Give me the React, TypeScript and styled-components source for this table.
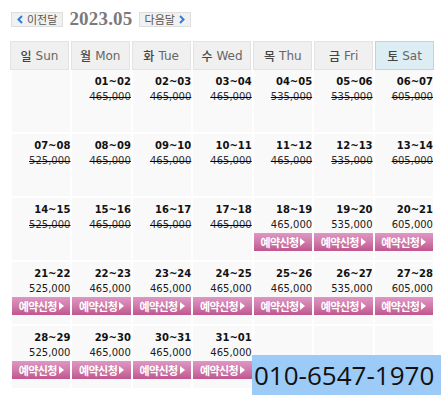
import styled, { createGlobalStyle } from "styled-components";

const GlobalStyle = createGlobalStyle`
  html, body { margin: 0; padding: 0; background: #fff; }
  body { font-family: "DejaVu Sans", "Noto Sans CJK KR", sans-serif; overflow: hidden; }
`;

const Page = styled.div`
  position: relative;
  width: 441px;
  height: 396px;
`;

const Nav = styled.div`
  display: flex;
  align-items: center;
  gap: 6px;
  height: 14px;
  margin: 12px 0 0 11px;
`;

const NavButton = styled.div`
  height: 13px;
  display: flex;
  align-items: center;
  gap: 4px;
  padding: 0 5px;
  border: 1px solid #dedede;
  background: #f1f1f1;
  font-family: "Noto Sans CJK KR", sans-serif;
  font-size: 11px;
  color: #555;
  line-height: 13px;
`;

const Year = styled.div`
  font-family: "Liberation Serif", serif;
  font-weight: bold;
  font-size: 19px;
  line-height: 14px;
  color: #7a7a7a;
  letter-spacing: 0.2px;
`;

const HeadRow = styled.div`
  display: grid;
  grid-template-columns: repeat(7, 1fr);
  gap: 2px;
  width: 424px;
  margin: 15px 0 0 10px;
  position: relative;
  z-index: 1;
`;

const HeadCell = styled.div<{ $sat?: boolean }>`
  height: 27px;
  display: flex;
  align-items: center;
  justify-content: center;
  gap: 4px;
  border: 1px solid ${(p) => (p.$sat ? "#bad6e6" : "#e3e3e3")};
  background: ${(p) => (p.$sat ? "#dcedf3" : "#f0f0f0")};
  font-size: 12px;
  color: #666;

  b {
    font-family: "Noto Sans CJK KR", sans-serif;
    font-weight: 500;
    color: #444;
  }
`;

const Body = styled.div`
  display: grid;
  grid-template-columns: repeat(7, 1fr);
  grid-auto-rows: 62px;
  gap: 2px;
  width: 421px;
  margin: 0 0 0 12px;
`;

const Day = styled.div`
  background: #f9f9f9;
  padding-top: 4px;
  text-align: right;
  font-size: 10px;
  line-height: 15px;
`;

const Dates = styled.div`
  font-weight: bold;
  color: #111;
`;

const Price = styled.div<{ $closed?: boolean }>`
  color: ${(p) => (p.$closed ? "#333" : "#1a1a1a")};
  text-decoration: ${(p) => (p.$closed ? "line-through" : "none")};
  text-decoration-color: #000;
`;

const BookButton = styled.div`
  margin-top: 1px;
  height: 18px;
  display: flex;
  align-items: center;
  justify-content: center;
  gap: 2px;
  background: linear-gradient(to bottom, #de97c4 0%, #d07aab 50%, #c1568f 100%);
  font-family: "Noto Sans CJK KR", sans-serif;
  font-weight: bold;
  font-size: 11px;
  color: #fff;
  letter-spacing: -0.6px;
`;

const Phone = styled.div`
  position: absolute;
  left: 252px;
  top: 343px;
  width: 189px;
  height: 40px;
  background: #9dcbf8;
  display: flex;
  align-items: center;
  padding-left: 2px;
  box-sizing: border-box;
  font-family: "Open Sans", sans-serif;
  font-size: 26px;
  color: #111;
  white-space: nowrap;
`;

type Cell = { d?: string; p?: string; open?: boolean };

const rows: Cell[][] = [
  [{}, { d: "01~02", p: "465,000" }, { d: "02~03", p: "465,000" }, { d: "03~04", p: "465,000" }, { d: "04~05", p: "535,000" }, { d: "05~06", p: "535,000" }, { d: "06~07", p: "605,000" }],
  [{ d: "07~08", p: "525,000" }, { d: "08~09", p: "465,000" }, { d: "09~10", p: "465,000" }, { d: "10~11", p: "465,000" }, { d: "11~12", p: "465,000" }, { d: "12~13", p: "535,000" }, { d: "13~14", p: "605,000" }],
  [{ d: "14~15", p: "525,000" }, { d: "15~16", p: "465,000" }, { d: "16~17", p: "465,000" }, { d: "17~18", p: "465,000" }, { d: "18~19", p: "465,000", open: true }, { d: "19~20", p: "535,000", open: true }, { d: "20~21", p: "605,000", open: true }],
  [{ d: "21~22", p: "525,000", open: true }, { d: "22~23", p: "465,000", open: true }, { d: "23~24", p: "465,000", open: true }, { d: "24~25", p: "465,000", open: true }, { d: "25~26", p: "465,000", open: true }, { d: "26~27", p: "535,000", open: true }, { d: "27~28", p: "605,000", open: true }],
  [{ d: "28~29", p: "525,000", open: true }, { d: "29~30", p: "465,000", open: true }, { d: "30~31", p: "465,000", open: true }, { d: "31~01", p: "465,000", open: true }, {}, {}, {}],
];

const days = [["일", "Sun"], ["월", "Mon"], ["화", "Tue"], ["수", "Wed"], ["목", "Thu"], ["금", "Fri"], ["토", "Sat"]];

const Chevron = ({ dir }: { dir: "l" | "r" }) => (
  <svg width="6" height="9" viewBox="0 0 6 9">
    <path d={dir === "l" ? "M5 1 L1.5 4.5 L5 8" : "M1 1 L4.5 4.5 L1 8"} fill="none" stroke="#2f7fd7" strokeWidth="2" />
  </svg>
);

export default function App() {
  return (
    <Page>
      <GlobalStyle />
      <Nav>
        <NavButton><Chevron dir="l" />이전달</NavButton>
        <Year>2023.05</Year>
        <NavButton>다음달<Chevron dir="r" /></NavButton>
      </Nav>
      <HeadRow>
        {days.map(([k, e], i) => (
          <HeadCell key={e} $sat={i === 6}><b>{k}</b>{e}</HeadCell>
        ))}
      </HeadRow>
      <Body>
        {rows.flat().map((c, i) => (
          <Day key={i}>
            {c.d && <Dates>{c.d}</Dates>}
            {c.p && <Price $closed={!c.open}>{c.p}</Price>}
            {c.open && (
              <BookButton>
                예약신청
                <svg width="5" height="8" viewBox="0 0 5 8"><path d="M0 0 L5 4 L0 8 Z" fill="#fff" /></svg>
              </BookButton>
            )}
          </Day>
        ))}
      </Body>
      <Phone>010-6547-1970</Phone>
    </Page>
  );
}
